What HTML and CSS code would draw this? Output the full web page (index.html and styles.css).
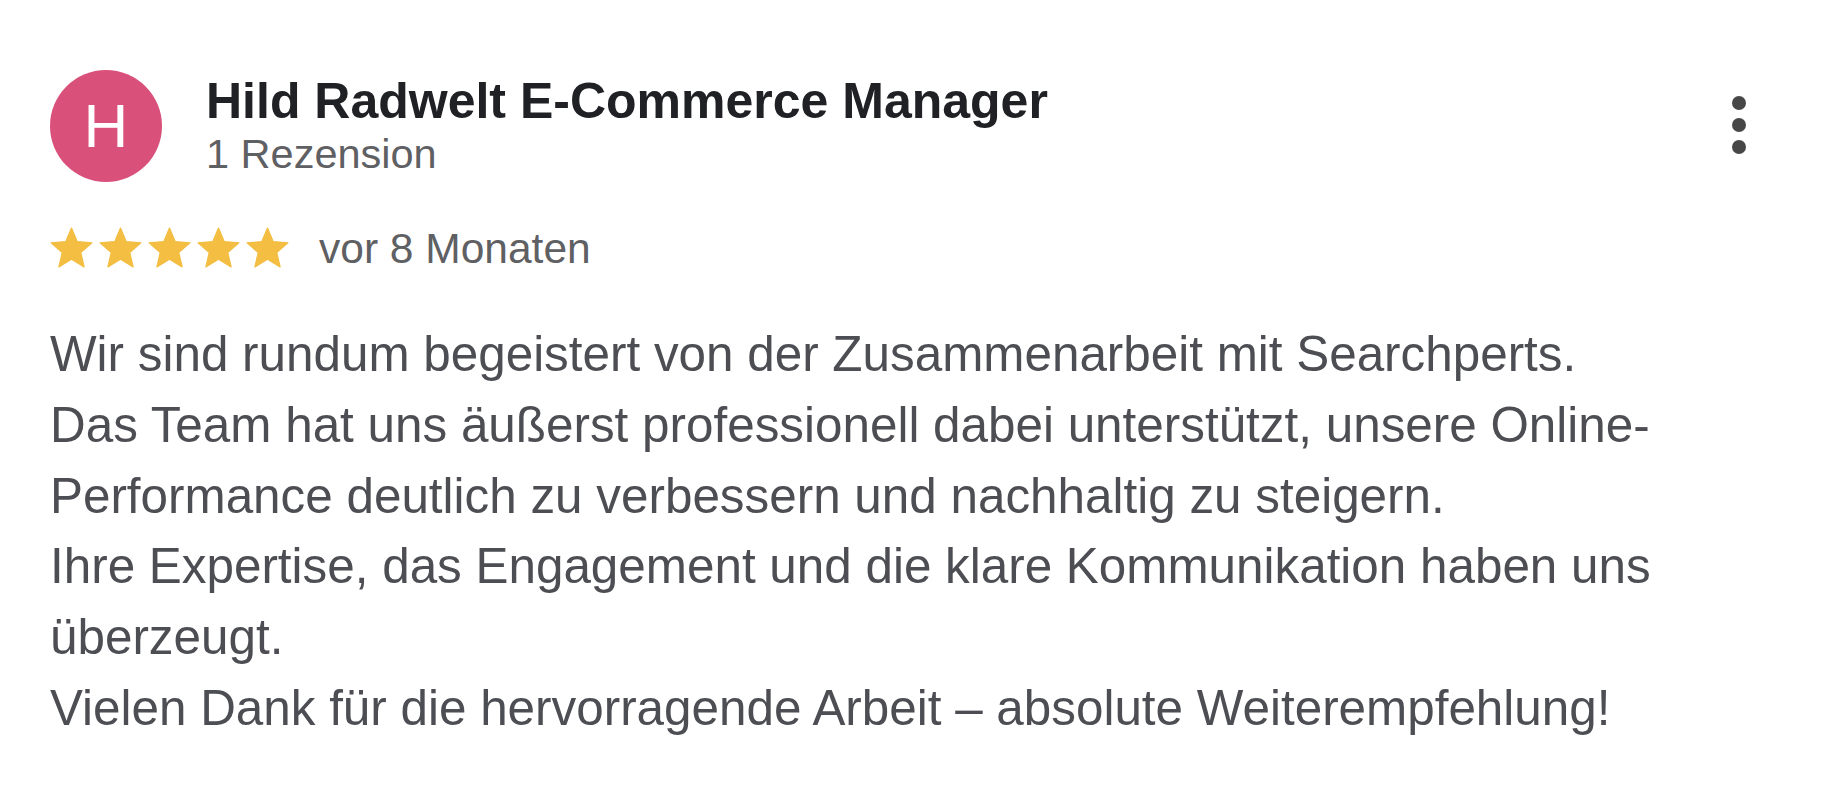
FILE: index.html
```html
<!DOCTYPE html>
<html lang="de">
<head>
<meta charset="utf-8">
<title>Rezension</title>
<link rel="stylesheet" href="styles.css">
</head>
<body>
<div class="review">
  <div class="header">
    <div class="avatar">H</div>
    <div class="author">
      <div class="name">Hild Radwelt E-Commerce Manager</div>
      <div class="count">1 Rezension</div>
    </div>
    <div class="kebab" aria-label="Mehr">
      <span class="dot"></span>
      <span class="dot"></span>
      <span class="dot"></span>
    </div>
  </div>
  <div class="rating">
    <div class="stars">
      <svg class="star" viewBox="0 0 24 24"><path d="M12 17.27L18.18 21l-1.64-7.03L22 9.24l-7.19-.61L12 2 9.19 8.63 2 9.240l5.46 4.73L5.82 21z" stroke-linejoin="round" stroke-width="0.6"/></svg>
      <svg class="star" viewBox="0 0 24 24"><path d="M12 17.27L18.18 21l-1.64-7.03L22 9.24l-7.19-.61L12 2 9.19 8.63 2 9.24l5.46 4.73L5.82 21z" stroke-linejoin="round" stroke-width="0.6"/></svg>
      <svg class="star" viewBox="0 0 24 24"><path d="M12 17.27L18.18 21l-1.64-7.03L22 9.24l-7.19-.61L12 2 9.19 8.63 2 9.24l5.46 4.73L5.82 21z" stroke-linejoin="round" stroke-width="0.6"/></svg>
      <svg class="star" viewBox="0 0 24 24"><path d="M12 17.27L18.18 21l-1.64-7.03L22 9.24l-7.19-.61L12 2 9.19 8.63 2 9.24l5.46 4.73L5.82 21z" stroke-linejoin="round" stroke-width="0.6"/></svg>
      <svg class="star" viewBox="0 0 24 24"><path d="M12 17.27L18.18 21l-1.64-7.03L22 9.24l-7.19-.61L12 2 9.19 8.63 2 9.24l5.46 4.73L5.82 21z" stroke-linejoin="round" stroke-width="0.6"/></svg>
    </div>
    <span class="date">vor 8 Monaten</span>
  </div>
  <p class="text">Wir sind rundum begeistert von der Zusammenarbeit mit Searchperts.<br>Das Team hat uns äußerst professionell dabei unterstützt, unsere Online-Performance deutlich zu verbessern und nachhaltig zu steigern.<br>Ihre Expertise, das Engagement und die klare Kommunikation haben uns überzeugt.<br>Vielen Dank für die hervorragende Arbeit – absolute Weiterempfehlung!</p>
</div>
</body>
</html>
```
FILE: styles.css
```css
html, body {
  margin: 0;
  padding: 0;
  background: #ffffff;
}
body {
  font-family: "Liberation Sans", Arial, Helvetica, sans-serif;
}
.review {
  padding: 70px 73px 0 50px;
}
.header {
  display: flex;
  align-items: flex-start;
}
.avatar {
  width: 112px;
  height: 112px;
  border-radius: 50%;
  background: #d9507a;
  color: #ffffff;
  font-size: 62px;
  line-height: 112px;
  text-align: center;
  flex: none;
}
.author {
  margin-left: 44px;
  margin-top: 6px;
  display: flex;
  flex-direction: column;
}
.name {
  font-size: 50px;
  font-weight: 700;
  line-height: 50px;
  color: #202124;
}
.count {
  margin-top: 3px;
  font-size: 41.5px;
  line-height: 50px;
  color: #5f6063;
}
.kebab {
  margin-left: auto;
  margin-top: 26px;
  width: 40px;
  display: flex;
  flex-direction: column;
  align-items: center;
  gap: 8px;
}
.dot {
  width: 14px;
  height: 14px;
  border-radius: 50%;
  background: #474747;
}
.rating {
  display: flex;
  align-items: center;
  margin-top: 42px;
  margin-left: -3px;
}
.stars {
  display: flex;
}
.star {
  width: 49px;
  height: 49px;
  fill: #f3be42;
  stroke: #f3be42;
}
.date {
  margin-left: 27px;
  font-size: 42.5px;
  line-height: 49px;
  color: #5f6063;
}
.text {
  margin: 46px 0 0 0;
  font-size: 49.4px;
  line-height: 70.8px;
  color: #4d4e53;
}
```
